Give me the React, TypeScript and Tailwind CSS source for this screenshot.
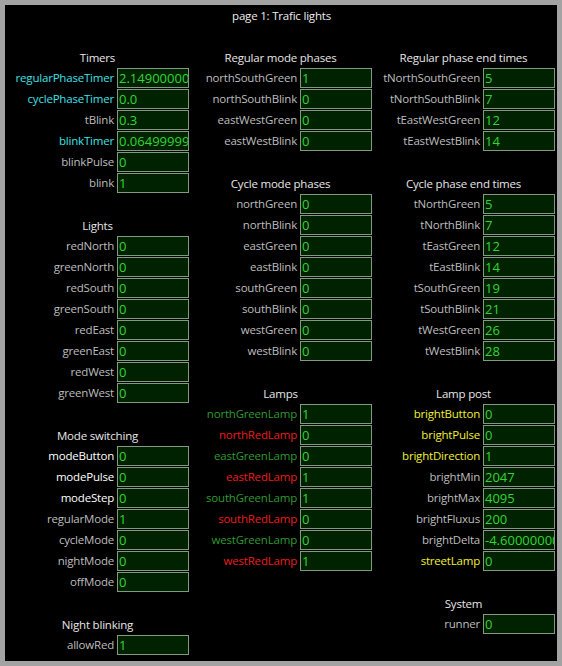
type Tone = "gray" | "cyan" | "white" | "green" | "red" | "yellow";

interface Field {
  label: string;
  value: string;
  tone?: Tone;
}

interface Section {
  title: string;
  fields: Field[];
}

const toneClass: Record<Tone, string> = {
  gray: "text-[#bdbdbd]",
  cyan: "text-[#3fe0e6]",
  white: "text-white",
  green: "text-[#2f9a2f]",
  red: "text-[#ee1c1c]",
  yellow: "text-[#f0f032]",
};

const columns: Section[][] = [
  [
    {
      title: "Timers",
      fields: [
        { label: "regularPhaseTimer", value: "2.149000000", tone: "cyan" },
        { label: "cyclePhaseTimer", value: "0.0", tone: "cyan" },
        { label: "tBlink", value: "0.3" },
        { label: "blinkTimer", value: "0.064999999", tone: "cyan" },
        { label: "blinkPulse", value: "0" },
        { label: "blink", value: "1" },
      ],
    },
    {
      title: "Lights",
      fields: [
        { label: "redNorth", value: "0" },
        { label: "greenNorth", value: "0" },
        { label: "redSouth", value: "0" },
        { label: "greenSouth", value: "0" },
        { label: "redEast", value: "0" },
        { label: "greenEast", value: "0" },
        { label: "redWest", value: "0" },
        { label: "greenWest", value: "0" },
      ],
    },
    {
      title: "Mode switching",
      fields: [
        { label: "modeButton", value: "0", tone: "white" },
        { label: "modePulse", value: "0", tone: "white" },
        { label: "modeStep", value: "0", tone: "white" },
        { label: "regularMode", value: "1" },
        { label: "cycleMode", value: "0" },
        { label: "nightMode", value: "0" },
        { label: "offMode", value: "0" },
      ],
    },
    {
      title: "Night blinking",
      fields: [{ label: "allowRed", value: "1" }],
    },
  ],
  [
    {
      title: "Regular mode phases",
      fields: [
        { label: "northSouthGreen", value: "1" },
        { label: "northSouthBlink", value: "0" },
        { label: "eastWestGreen", value: "0" },
        { label: "eastWestBlink", value: "0" },
      ],
    },
    {
      title: "Cycle mode phases",
      fields: [
        { label: "northGreen", value: "0" },
        { label: "northBlink", value: "0" },
        { label: "eastGreen", value: "0" },
        { label: "eastBlink", value: "0" },
        { label: "southGreen", value: "0" },
        { label: "southBlink", value: "0" },
        { label: "westGreen", value: "0" },
        { label: "westBlink", value: "0" },
      ],
    },
    {
      title: "Lamps",
      fields: [
        { label: "northGreenLamp", value: "1", tone: "green" },
        { label: "northRedLamp", value: "0", tone: "red" },
        { label: "eastGreenLamp", value: "0", tone: "green" },
        { label: "eastRedLamp", value: "1", tone: "red" },
        { label: "southGreenLamp", value: "1", tone: "green" },
        { label: "southRedLamp", value: "0", tone: "red" },
        { label: "westGreenLamp", value: "0", tone: "green" },
        { label: "westRedLamp", value: "1", tone: "red" },
      ],
    },
  ],
  [
    {
      title: "Regular phase end times",
      fields: [
        { label: "tNorthSouthGreen", value: "5" },
        { label: "tNorthSouthBlink", value: "7" },
        { label: "tEastWestGreen", value: "12" },
        { label: "tEastWestBlink", value: "14" },
      ],
    },
    {
      title: "Cycle phase end times",
      fields: [
        { label: "tNorthGreen", value: "5" },
        { label: "tNorthBlink", value: "7" },
        { label: "tEastGreen", value: "12" },
        { label: "tEastBlink", value: "14" },
        { label: "tSouthGreen", value: "19" },
        { label: "tSouthBlink", value: "21" },
        { label: "tWestGreen", value: "26" },
        { label: "tWestBlink", value: "28" },
      ],
    },
    {
      title: "Lamp post",
      fields: [
        { label: "brightButton", value: "0", tone: "yellow" },
        { label: "brightPulse", value: "0", tone: "yellow" },
        { label: "brightDirection", value: "1", tone: "yellow" },
        { label: "brightMin", value: "2047" },
        { label: "brightMax", value: "4095" },
        { label: "brightFluxus", value: "200" },
        { label: "brightDelta", value: "-4.600000000" },
        { label: "streetLamp", value: "0", tone: "yellow" },
      ],
    },
    {
      title: "System",
      fields: [{ label: "runner", value: "0" }],
    },
  ],
];

function FieldRow({ field }: { field: Field }) {
  return (
    <div className="flex h-[21px]">
      <div
        className={`flex-1 text-right pr-[3px] text-[11.5px] tracking-[-0.2px] leading-[20px] whitespace-nowrap ${toneClass[field.tone ?? "gray"]}`}
      >
        {field.label}
      </div>
      <div className="w-[72px] h-[20px] border border-[#7f9a7f] bg-[#002200] overflow-hidden">
        <div className="pl-[1px] text-[13px] leading-[18px] text-[#35d435] whitespace-nowrap">
          {field.value}
        </div>
      </div>
    </div>
  );
}

export default function App() {
  return (
    <div
      className="w-[562px] h-[666px] bg-[#a3a3a3] p-[5px]"
      style={{ fontFamily: '"Open Sans", "Noto Sans", sans-serif' }}
    >
      <div className="h-full bg-black pl-[1px] overflow-hidden">
        <div className="h-[21px] text-center text-[11.5px] tracking-[-0.2px] leading-[22px] text-[#ececec]">
          page 1: Trafic lights
        </div>
        <div className="h-[21px]" />
        <div className="grid grid-cols-[183px_183px_183px]">
          {columns.map((sections, ci) => (
            <div key={ci} className="flex flex-col gap-[21px]">
              {sections.map((s) => (
                <div key={s.title}>
                  <div className="h-[21px] text-center text-[11.5px] tracking-[-0.2px] leading-[22px] text-[#e6e6e6]">
                    {s.title}
                  </div>
                  {s.fields.map((f) => (
                    <FieldRow key={f.label} field={f} />
                  ))}
                </div>
              ))}
            </div>
          ))}
        </div>
      </div>
    </div>
  );
}
